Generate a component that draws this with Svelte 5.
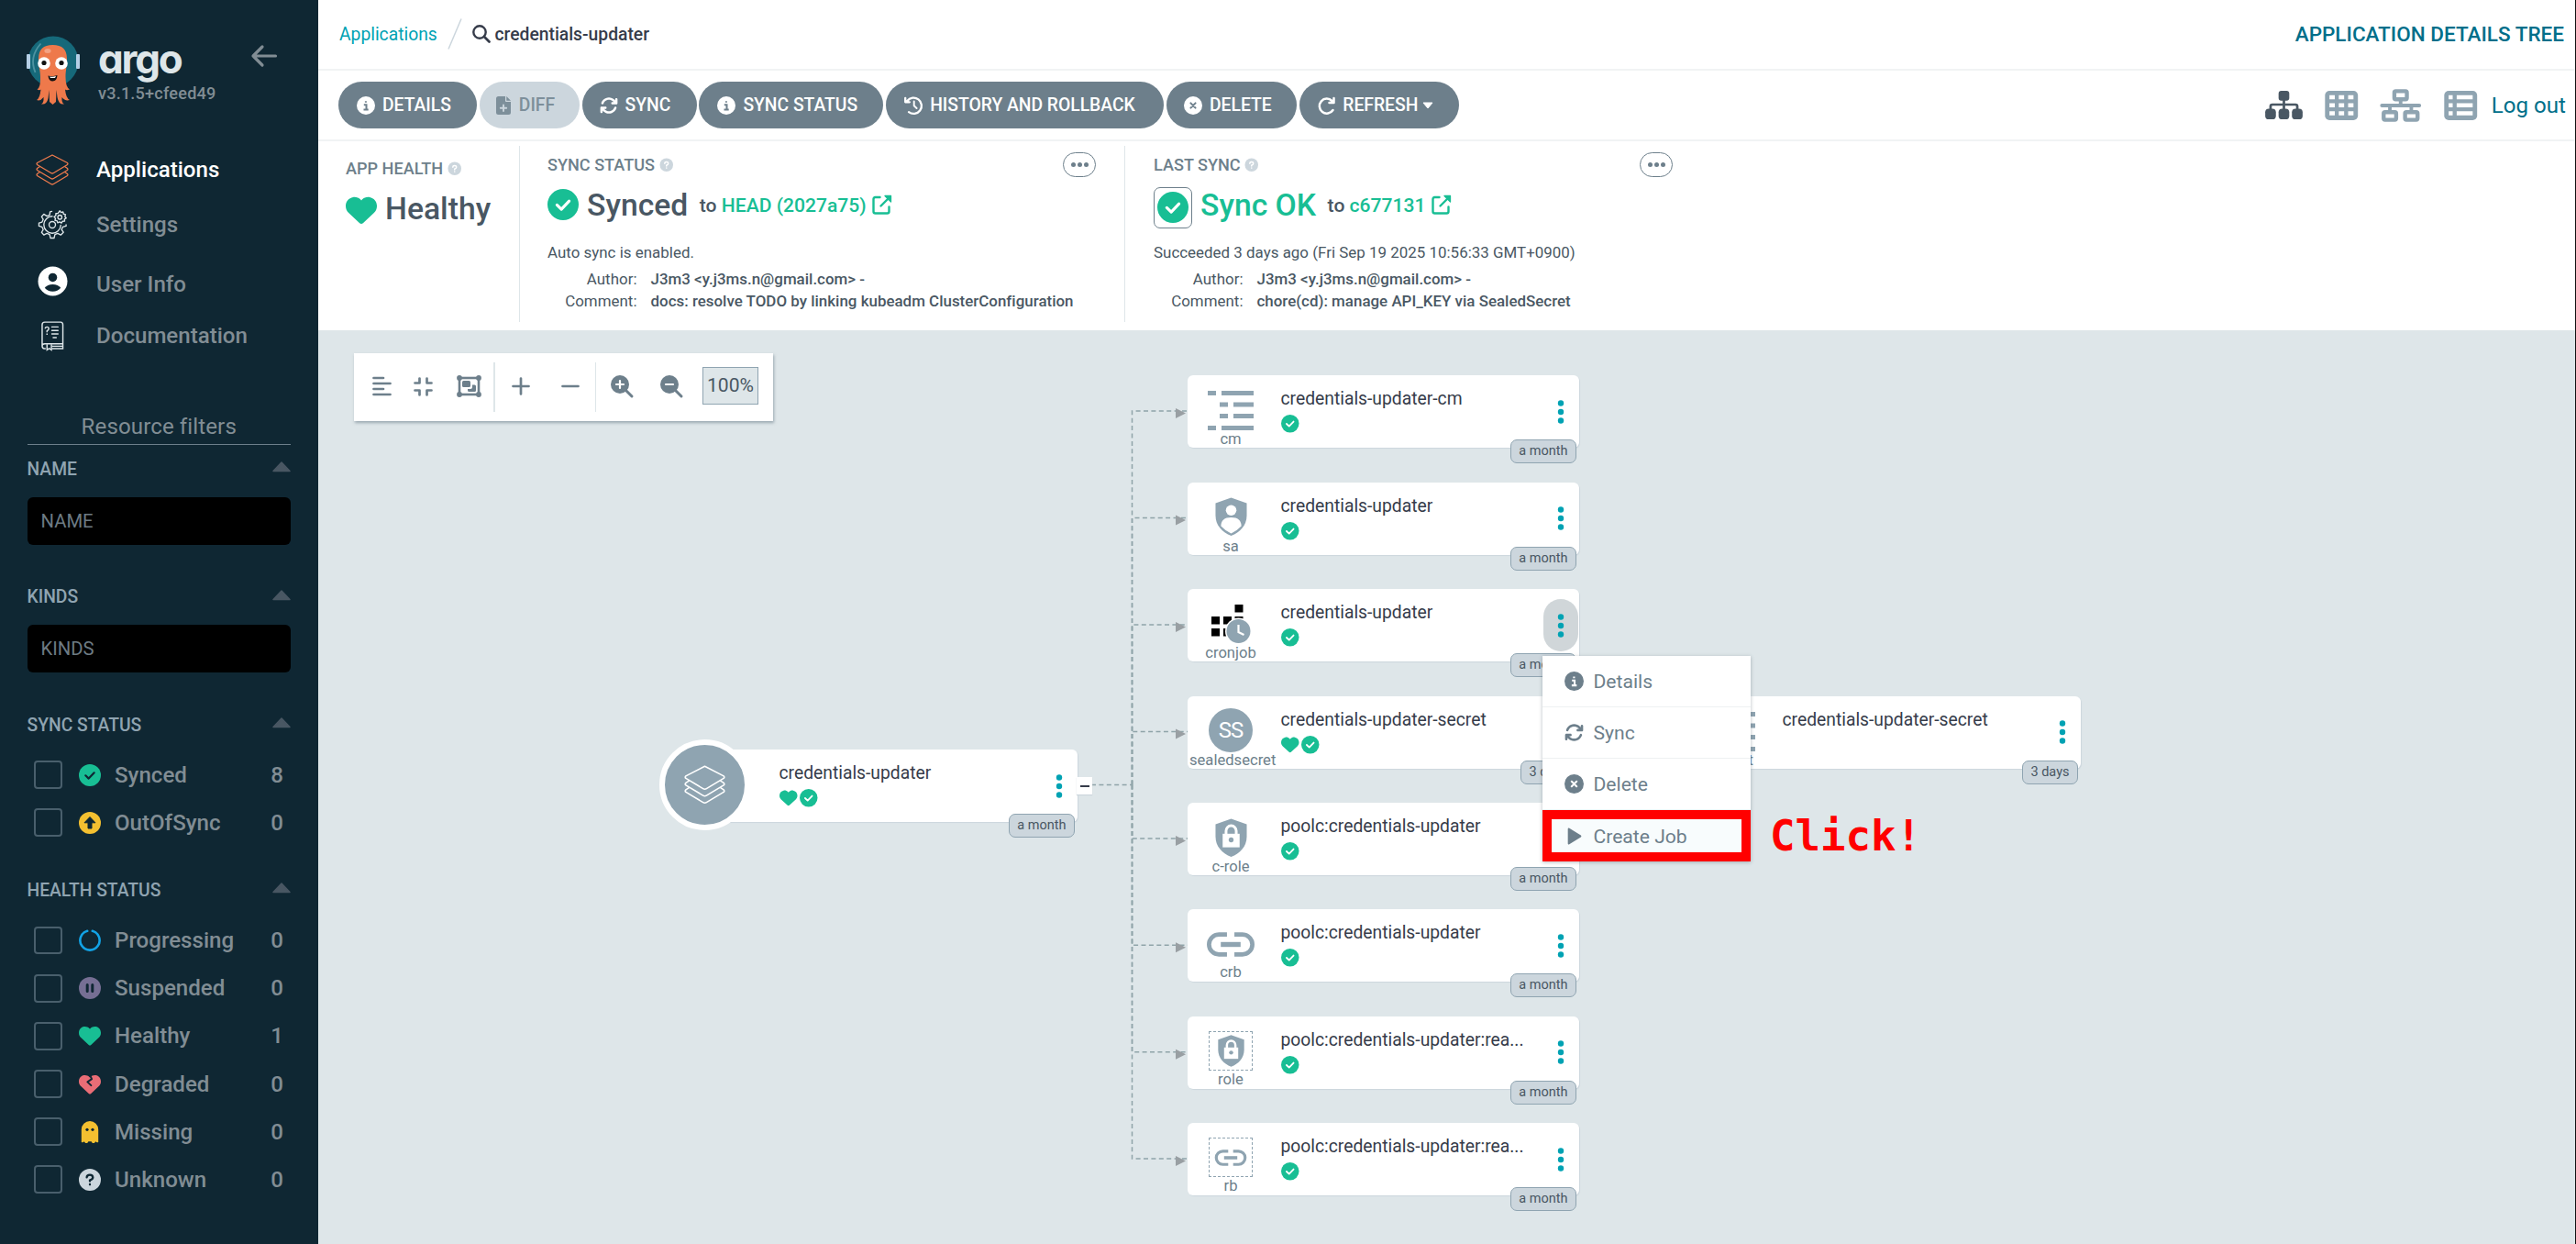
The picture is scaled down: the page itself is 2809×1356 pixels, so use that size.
<script>
  const nav = [
    { label: 'Applications', icon: 'layers', active: true },
    { label: 'Settings', icon: 'gears' },
    { label: 'User Info', icon: 'user' },
    { label: 'Documentation', icon: 'book' }
  ];

  const syncFilters = [
    { label: 'Synced', icon: 'check', count: 8 },
    { label: 'OutOfSync', icon: 'up', count: 0 }
  ];

  const healthFilters = [
    { label: 'Progressing', icon: 'ring', count: 0 },
    { label: 'Suspended', icon: 'pause', count: 0 },
    { label: 'Healthy', icon: 'heart', count: 1 },
    { label: 'Degraded', icon: 'broken', count: 0 },
    { label: 'Missing', icon: 'ghost', count: 0 },
    { label: 'Unknown', icon: 'unknown', count: 0 }
  ];

  const actions = [
    { label: 'DETAILS', icon: 'info', cls: 'b-details' },
    { label: 'DIFF', icon: 'file', cls: 'b-diff', disabled: true },
    { label: 'SYNC', icon: 'sync', cls: 'b-sync' },
    { label: 'SYNC STATUS', icon: 'info', cls: 'b-status' },
    { label: 'HISTORY AND ROLLBACK', icon: 'history', cls: 'b-history' },
    { label: 'DELETE', icon: 'cross', cls: 'b-delete' },
    { label: 'REFRESH', icon: 'refresh', cls: 'b-refresh', caret: true }
  ];

  // Coordinates are relative to the tree canvas.
  const COL = 948;
  const nodes = [
    { x: COL, y: 49, kind: 'cm', icon: 'cm', name: 'credentials-updater-cm', age: 'a month', synced: true },
    { x: COL, y: 165.5, kind: 'sa', icon: 'sa', name: 'credentials-updater', age: 'a month', synced: true },
    { x: COL, y: 282, kind: 'cronjob', icon: 'cronjob', name: 'credentials-updater', age: 'a month', synced: true, open: true },
    { x: COL, y: 398.5, kind: 'sealedsecret', icon: 'ss', name: 'credentials-updater-secret', age: '3 days', synced: true, healthy: true },
    { x: COL, y: 515, kind: 'c-role', icon: 'crole', name: 'poolc:credentials-updater', age: 'a month', synced: true },
    { x: COL, y: 631.3, kind: 'crb', icon: 'crb', name: 'poolc:credentials-updater', age: 'a month', synced: true },
    { x: COL, y: 747.8, kind: 'role', icon: 'role', name: 'poolc:credentials-updater:rea...', age: 'a month', synced: true },
    { x: COL, y: 864, kind: 'rb', icon: 'rb', name: 'poolc:credentials-updater:rea...', age: 'a month', synced: true },
    { x: 1495, y: 398.5, kind: 'secret', icon: 'cm', name: 'credentials-updater-secret', age: '3 days' }
  ];
  const children = nodes.slice(0, 8);

  const menu = [
    { label: 'Details', icon: 'info' },
    { label: 'Sync', icon: 'sync' },
    { label: 'Delete', icon: 'cross' },
    { label: 'Create Job', icon: 'play' }
  ];
</script>

{#snippet shield()}
  <path d="M25 2 L48 10 V28 C48 43 38 53 25 58 C12 53 2 43 2 28 V10 Z" fill="#8fa4b1" />
{/snippet}

{#snippet lock()}
  <path d="M17.5 26 V20 a7.5 8 0 0 1 15 0 V26" fill="none" stroke="#fff" stroke-width="4" />
  <rect x="12.5" y="24" width="25" height="20" fill="#fff" />
  <circle cx="25" cy="33" r="3.6" fill="#8fa4b1" />
{/snippet}

{#snippet chain()}
  <path d="M34 4 H21 a16 16 0 0 0 0 32 H34 M46 4 H59 a16 16 0 0 1 0 32 H46" fill="none" stroke="#8fa4b1" stroke-width="7" />
  <path d="M24 20 H56" stroke="#8fa4b1" stroke-width="8" />
{/snippet}

{#snippet icon(name)}
  {#if name === 'layers'}
    <svg class="ic-layers" viewBox="0 0 36 34" fill="none" stroke="currentColor" stroke-width="1.3" stroke-linejoin="round">
      <path d="M18 1 L34.5 9.5 Q35.5 10.5 34.5 11.5 L19.5 20.5 Q18 21.5 16.5 20.5 L1.5 11.5 Q.5 10.5 1.5 9.5 Z" />
      <path d="M4.5 13.5 L1.5 15.5 Q.5 16.5 1.5 17.5 L16.5 26.5 Q18 27.5 19.5 26.5 L34.5 17.5 Q35.5 16.5 34.5 15.5 L31.5 13.5" />
      <path d="M4.5 19.5 L1.5 21.5 Q.5 22.5 1.5 23.5 L16.5 32.5 Q18 33.5 19.5 32.5 L34.5 23.5 Q35.5 22.5 34.5 21.5 L31.5 19.5" />
    </svg>
  {:else if name === 'gears'}
    <svg class="ic-gears" viewBox="0 0 34 34" fill="none" stroke="currentColor" stroke-width="1.4" stroke-linejoin="round" stroke-linecap="round">
      <path d="M16 2.5 L14 3 L13.5 6.5 L10.5 7.8 L7 5.5 L4.5 8.5 L6.3 11.5 L5 14.5 L1.5 15.5 V19 L5 20 L6.3 23 L4.5 26 L7 29 L10.5 27.2 L13.5 28.5 L14.5 32.5 H18.5 L19.5 28.5 L22.5 27.2 L26 29 L29 26 L27 23 L28.2 20 L32 19 V17.5" />
      <path d="M16.5 8 A9.5 9.5 0 1 0 26 18" />
      <circle cx="16.5" cy="17.5" r="3.6" />
      <circle cx="25" cy="9" r="2.3" />
      <path d="M25 1.8 l1.3 2 2.3-.7 .5 2.3 2.3 .6 -.7 2.2 1.5 1.7 -2 1.3 .2 2.3 -2.4 .1 -1.2 2 -2-1.3 -2.2 1 -.8-2.3 -2.3-.4 .6-2.3 -1.6-1.7 2-1.4 0-2.3 2.3-.2 z" />
    </svg>
  {:else if name === 'user'}
    <svg class="ic-user" viewBox="0 0 34 34">
      <circle cx="17" cy="17" r="16.5" fill="#fff" />
      <circle cx="17" cy="12.8" r="4.9" fill="#0f2733" />
      <path d="M8 24.5 Q11 20.5 17 20.5 T26 24.5 Q22.5 28.5 17 28.5 T8 24.5 Z" fill="#0f2733" />
    </svg>
  {:else if name === 'book'}
    <svg class="ic-book" viewBox="0 0 26 34" fill="none" stroke="currentColor" stroke-width="1.5">
      <path d="M5 31 H3.5 Q1 31 1 28 V4 Q1 1 4 1 H22 Q24.5 1 24.5 4 V27 M1 28 Q1 25.5 4 25.5 H24.5 M12 31 H24.5 V25.5 M12 28.3 H24.5" />
      <path d="M6.5 26 V32.5 L9 31 L11.5 32.5 V26" />
      <path d="M12 6.5 H19 M12 10.5 H19 M12 14.5 H19 M13.5 18.5 H17" stroke-linecap="round" />
      <path d="M4.5 8.5 Q4.5 6.5 6.5 6.5 T8.5 8.5 Q8.5 10 6.5 11 V12.5 M6.5 14 V15.5" />
    </svg>
  {:else if name === 'check'}
    <svg class="ic-dot" viewBox="0 0 24 24"><circle cx="12" cy="12" r="12" fill="#18be94" /><path class="tick" d="M7.3 12.3 L10.7 15.6 L16.7 9.3" fill="none" stroke-width="2.2" stroke-linecap="round" stroke-linejoin="round" /></svg>
  {:else if name === 'up'}
    <svg class="ic-dot" viewBox="0 0 24 24"><circle cx="12" cy="12" r="12" fill="#f4c030" /><path d="M12 5.5 L18 11.8 H14 V18 H10 V11.8 H6 Z" fill="#0f2733" stroke="#0f2733" stroke-linejoin="round" /></svg>
  {:else if name === 'ring'}
    <svg class="ic-dot" viewBox="0 0 24 24"><path d="M9.2 1.8 A10.6 10.6 0 1 0 14.8 1.8" fill="none" stroke="#12a3e6" stroke-width="2.6" stroke-linecap="round" /></svg>
  {:else if name === 'pause'}
    <svg class="ic-dot" viewBox="0 0 24 24"><circle cx="12" cy="12" r="12" fill="#766f94" /><path d="M9.2 8.5 V15.5 M14.8 8.5 V15.5" stroke="#0f2733" stroke-width="3" stroke-linecap="round" /></svg>
  {:else if name === 'heart'}
    <svg class="ic-dot" viewBox="0 0 512 512"><path fill="#18be94" d="M47.6 300.4L228.3 469.1c7.5 7 17.4 10.9 27.7 10.9s20.2-3.9 27.7-10.9L464.4 300.4c30.4-28.3 47.6-68 47.6-109.5v-5.8c0-69.9-50.5-129.5-119.4-141C347 36.5 300.6 51.4 268 84L256 96 244 84c-32.6-32.6-79-47.5-124.6-39.9C50.5 55.6 0 115.2 0 185.1v5.8c0 41.5 17.2 81.2 47.6 109.5z" /></svg>
  {:else if name === 'broken'}
    <svg class="ic-dot" viewBox="0 0 512 512"><path fill="#e96d76" d="M47.6 300.4L228.3 469.1c7.5 7 17.4 10.9 27.7 10.9s20.2-3.9 27.7-10.9L464.4 300.4c30.4-28.3 47.6-68 47.6-109.5v-5.8c0-69.9-50.5-129.5-119.4-141C347 36.5 300.6 51.4 268 84L256 96 244 84c-32.6-32.6-79-47.5-124.6-39.9C50.5 55.6 0 115.2 0 185.1v5.8c0 41.5 17.2 81.2 47.6 109.5z" /><path d="M262 50 L300 130 L200 200 L285 280" fill="none" stroke="#0f2733" stroke-width="42" stroke-linejoin="round" stroke-linecap="round" /></svg>
  {:else if name === 'ghost'}
    <svg class="ic-dot" viewBox="0 0 24 24"><path d="M2.8 9.2 A9.2 9.2 0 0 1 21.2 9.2 V23 Q19.5 24 18.3 22.3 L16.8 24 H14.8 L13.6 22.3 H10.4 L9.2 24 H7.2 L5.7 22.3 Q4.5 24 2.8 23 Z" fill="#f4c030" /><circle cx="9" cy="9.3" r="1.6" fill="#0f2733" /><circle cx="15" cy="9.3" r="1.6" fill="#0f2733" /></svg>
  {:else if name === 'unknown'}
    <svg class="ic-dot" viewBox="0 0 24 24"><circle cx="12" cy="12" r="12" fill="#ccd6dd" /><path d="M8.6 9.3 Q8.8 6.6 12 6.6 T15.3 9.6 Q15.2 11.2 12 12.6 V13.6 M12 17 V17.3" fill="none" stroke="#0f2733" stroke-width="2.3" stroke-linecap="round" /></svg>
  {:else if name === 'info'}
    <svg class="ic" viewBox="0 0 20 20"><circle cx="10" cy="10" r="10" fill="currentColor" /><path class="hole" d="M7.8 9.3 H10.5 V14.3 M7.5 14.4 H12.7 M9.9 5.2 V6.8" fill="none" stroke-width="2" /></svg>
  {:else if name === 'cross'}
    <svg class="ic" viewBox="0 0 20 20"><circle cx="10" cy="10" r="10" fill="currentColor" /><path class="hole" d="M7.4 7.4 L12.6 12.6 M12.6 7.4 L7.4 12.6" fill="none" stroke-width="2" stroke-linecap="round" /></svg>
  {:else if name === 'file'}
    <svg class="ic ic-file" viewBox="0 0 17 20"><path d="M2.5 0 H10 V5 Q10 6 11 6 H16 V17.5 Q16 20 13.5 20 H2.5 Q0 20 0 17.5 V2.5 Q0 0 2.5 0 Z M11.3 0 L16 4.8 H11.3 Z" fill="currentColor" /><path d="M8 9.5 V16 M4.8 12.7 H11.2" stroke="#ccd6dd" stroke-width="1.9" stroke-linecap="round" /></svg>
  {:else if name === 'sync'}
    <svg class="ic" viewBox="0 0 512 512"><path fill="currentColor" d="M105.1 202.6c7.7-21.8 20.2-42.3 37.8-59.8c62.5-62.5 163.8-62.5 226.3 0L386.3 160H352c-17.7 0-32 14.3-32 32s14.3 32 32 32H463.9c17.7 0 32-14.3 32-32V80c0-17.7-14.3-32-32-32s-32 14.3-32 32v35.2L414.4 97.6c-87.5-87.5-229.3-87.5-316.8 0C73.2 122 55.6 150.7 44.8 181.4c-5.9 16.7 2.9 34.9 19.5 40.8s34.9-2.9 40.8-19.5zM39 289.3c-5 1.5-9.8 4.2-13.7 8.2c-4 4-6.7 8.8-8.1 14c-.3 1.2-.6 2.5-.8 3.8c-.3 1.7-.4 3.4-.4 5.1V432c0 17.7 14.3 32 32 32s32-14.3 32-32V396.9l17.6 17.5c87.5 87.4 229.3 87.4 316.7 0c24.4-24.4 42.1-53.1 52.9-83.7c5.9-16.7-2.9-34.9-19.5-40.8s-34.9 2.9-40.8 19.5c-7.7 21.8-20.2 42.3-37.8 59.8c-62.5 62.5-163.8 62.5-226.3 0L125.6 352H160c17.7 0 32-14.3 32-32s-14.3-32-32-32H48.4c-1.6 0-3.2 .1-4.8 .3s-3.1 .5-4.6 1z" /></svg>
  {:else if name === 'history'}
    <svg class="ic" viewBox="0 0 20 20" fill="none" stroke="currentColor" stroke-width="2.3" stroke-linecap="round" stroke-linejoin="round"><path d="M3.3 5 A8.7 8.7 0 1 1 5 17.2 M1.2 1.8 V6.3 H5.8" /><path d="M10.7 5.5 V10.3 L13.6 13" stroke-width="1.9" /></svg>
  {:else if name === 'refresh'}
    <svg class="ic ic-refresh" viewBox="0 0 19 20" fill="none" stroke="currentColor" stroke-width="2.5" stroke-linecap="round" stroke-linejoin="round"><path d="M16.5 15 A8 8 0 1 1 15.5 5 L17 6.5 M17.5 2 V7 H12.5" /></svg>
  {:else if name === 'play'}
    <svg class="ic" viewBox="0 0 20 20"><path d="M4.5 2.5 L16.5 10 L4.5 17.5 Z" fill="currentColor" stroke="currentColor" stroke-width="2" stroke-linejoin="round" /></svg>
  {:else if name === 'link'}
    <svg class="ic-link" viewBox="0 0 22 22" fill="none" stroke="#18be94" stroke-width="2.4" stroke-linecap="round" stroke-linejoin="round"><path d="M8.5 3 H3.5 Q1.5 3 1.5 5 V18.5 Q1.5 20.5 3.5 20.5 H16.5 Q18.5 20.5 18.5 18.5 V13.5" /><path d="M9.5 12.5 L19 3" /><path d="M14 1.5 H20.5 V8 Z" fill="#18be94" stroke-width="1.3" /></svg>
  {:else if name === 'help'}
    <svg class="ic-help" viewBox="0 0 16 16"><circle cx="8" cy="8" r="7.5" fill="#ccd6dd" /><path d="M6 6.4 Q6 4.6 8 4.6 T10 6.4 Q10 7.5 8 8.5 V9.2 M8 11.3 V11.5" fill="none" stroke="#fff" stroke-width="1.5" stroke-linecap="round" /></svg>
  {:else if name === 'dots'}
    <svg class="ic-kebab" viewBox="0 0 8 26" fill="#00a2b3"><circle cx="4" cy="3.5" r="3.2" /><circle cx="4" cy="13" r="3.2" /><circle cx="4" cy="22.5" r="3.2" /></svg>
  {:else if name === 'cm'}
    <svg class="k-cm" viewBox="0 0 50 44" fill="#8fa4b1"><rect x="0" y="0" width="9" height="5" /><rect x="15" y="0" width="35" height="5" /><rect x="13" y="12.5" width="9" height="5" /><rect x="28" y="12.5" width="22" height="5" /><rect x="13" y="25" width="9" height="5" /><rect x="28" y="25" width="22" height="5" /><rect x="0" y="38" width="9" height="5" /><rect x="15" y="38" width="35" height="5" /></svg>
  {:else if name === 'sa'}
    <svg class="k-shield" viewBox="0 0 50 60">{@render shield()}<circle cx="25" cy="20.5" r="7.8" fill="#fff" /><path d="M10 44 Q10 31 25 31 T40 44 Q33 51.5 25 54.5 Q17 51.5 10 44 Z" fill="#fff" /></svg>
  {:else if name === 'crole'}
    <svg class="k-shield" viewBox="0 0 50 60">{@render shield()}{@render lock()}</svg>
  {:else if name === 'cronjob'}
    <svg class="k-cron" viewBox="0 0 43 43"><path d="M25.5 0 h9 v8.5 h-9 z M0 13 h9 v8.5 h-9 z M13 13 h9 v8.5 h-9 z M25.5 13 h9 v8.5 h-9 z M0 26 h9 v8.5 h-9 z M13 26 h9 v8.5 h-9 z" fill="#000" /><circle cx="29.5" cy="29" r="14.5" fill="#fff" /><circle cx="29.5" cy="29" r="13" fill="#8fa4b1" /><path d="M29.5 22 V30 L35.5 33" fill="none" stroke="#fff" stroke-width="2.2" /></svg>
  {:else if name === 'ss'}
    <span class="k-ss">SS</span>
  {:else if name === 'crb'}
    <svg class="k-crb" viewBox="0 0 80 40">{@render chain()}</svg>
  {:else if name === 'role'}
    <span class="k-box"><svg class="k-role" viewBox="0 0 50 60">{@render shield()}{@render lock()}</svg></span>
  {:else if name === 'rb'}
    <span class="k-box"><svg class="k-rb" viewBox="0 0 80 40">{@render chain()}</svg></span>
  {/if}
{/snippet}

{#snippet filterHead(title)}
  <div class="filter-head">
    <span>{title}</span>
    <svg class="tri" viewBox="0 0 20 12"><path d="M10 1 L19 10.5 H1 Z" fill="#495763" stroke="#495763" stroke-width="1.5" stroke-linejoin="round" /></svg>
  </div>
{/snippet}

{#snippet filterRow(item)}
  <label class="filter-row">
    <span class="box"></span>
    {@render icon(item.icon)}
    <span class="f-label">{item.label}</span>
    <span class="f-count">{item.count}</span>
  </label>
{/snippet}

<div class="app">
  <aside class="sidebar">
    <div class="brand">
      <svg class="argo-logo" viewBox="0 0 60 78">
        <circle cx="30" cy="29" r="27.5" fill="#16697a" />
        <path d="M10.500 41 Q3.500 24 16.500 9.500" fill="none" stroke="#4c93a1" stroke-width="1.8" />
        <rect x="1" y="21" width="4" height="16" rx="1" fill="#b4cfe6" />
        <rect x="55" y="21" width="4" height="16" rx="1" fill="#b4cfe6" />
        <path d="M14 26 Q14 11 29.5 11 T45 26 C45 36 43.500 38 43.500 46 Q43.500 57 48 59.500 Q44.500 61 43 59.500 Q44 69 48 71 Q43 72.500 39.500 68 Q39 74 42 75.500 Q36 76.500 34.500 68 L33.500 60 L33 73 L29.500 76 L26 73 L25.500 60 L24.500 69 Q23 76.500 17 75.500 Q20 74 19.500 68 Q16 72.500 12 71 Q15.500 69 16.500 59.500 Q15 61 12.500 59.500 Q16.500 57 16 46 C16 38 14 36 14 26 Z" fill="#ee794b" />
        <ellipse cx="24" cy="17.5" rx="3.6" ry="2.5" fill="#f4a284" />
        <circle cx="20" cy="31" r="6.8" fill="#fff" />
        <circle cx="39" cy="31" r="6.8" fill="#fff" />
        <circle cx="20" cy="30.5" r="2.6" fill="#111" />
        <circle cx="39" cy="30.5" r="2.6" fill="#111" />
        <path d="M24.500 44.500 Q29.500 46 34.500 44 Q34 50.500 29.500 50.500 T24.500 44.500 Z" fill="#111" />
        <path d="M26 45.400 Q29.500 46.200 33 45 L32 47 H27 Z" fill="#fff" />
      </svg>
      <div class="brand-text">
        <span class="wordmark">argo</span>
        <span class="version">v3.1.5+cfeed49</span>
      </div>
      <svg class="back" viewBox="0 0 28 24" fill="none" stroke="#818d94" stroke-width="3.2" stroke-linecap="round" stroke-linejoin="round"><path d="M26.500 12 H2 M12 2 L2 12 L12 22" /></svg>
    </div>

    <nav>
      {#each nav as n}
        <div class="nav-item {n.icon}" class:active={n.active}>
          <span class="nav-icon">{@render icon(n.icon)}</span>
          <span class="nav-label">{n.label}</span>
        </div>
      {/each}
    </nav>

    <div class="filters">
      <div class="filters-title">Resource filters</div>
      {@render filterHead('NAME')}
      <div class="field">NAME</div>
      <div class="kinds">
        {@render filterHead('KINDS')}
        <div class="field">KINDS</div>
      </div>
      <div class="sync-group">
        {@render filterHead('SYNC STATUS')}
        {#each syncFilters as f}{@render filterRow(f)}{/each}
      </div>
      <div class="health-group">
        {@render filterHead('HEALTH STATUS')}
        {#each healthFilters as f}{@render filterRow(f)}{/each}
      </div>
    </div>
  </aside>

  <main>
    <header class="crumbs">
      <span class="crumb-link">Applications</span>
      <svg class="slash" viewBox="0 0 16 34"><path d="M15 .5 L1 33.5" stroke="#ccd6dd" stroke-width="1.5" /></svg>
      <svg class="search" viewBox="0 0 20 20" fill="none" stroke="#363c4a" stroke-linecap="round"><circle cx="8" cy="8" r="6.7" stroke-width="2.4" /><path d="M13 13 L18.5 18.5" stroke-width="2.8" /></svg>
      <span class="crumb-current">credentials-updater</span>
      <span class="page-title">APPLICATION DETAILS TREE</span>
    </header>

    <div class="toolbar">
      {#each actions as a}
        <div class="btn {a.cls}" class:disabled={a.disabled}>
          {@render icon(a.icon)}<span>{a.label}</span>
          {#if a.caret}<svg class="caret" viewBox="0 0 12 8"><path d="M1 1 H11 L6 7 Z" fill="#fff" stroke="#fff" stroke-linejoin="round" /></svg>{/if}
        </div>
      {/each}
      <div class="views">
        <svg class="v-tree" viewBox="0 0 42 34" fill="#495763"><rect x="15" y="1" width="12" height="11" rx="3" /><rect x="0" y="21" width="12" height="12" rx="4" /><rect x="15" y="21" width="12" height="12" rx="4" /><rect x="30" y="21" width="12" height="12" rx="4" /><path d="M21 10 V22 M6 22 V18.5 Q6 16.5 8 16.5 H34 Q36 16.5 36 18.5 V22" fill="none" stroke="#495763" stroke-width="2.8" /></svg>
        <svg class="v-grid" viewBox="0 0 37 33"><rect x="0" y="0" width="37" height="33" rx="5" fill="#8fa4b1" /><path d="M5 5 h6 v4.5 h-6z M15.5 5 h6 v4.5 h-6z M26 5 h6 v4.5 h-6z M5 14 h6 v4.5 h-6z M15.5 14 h6 v4.5 h-6z M26 14 h6 v4.5 h-6z M5 23 h6 v4.5 h-6z M15.5 23 h6 v4.5 h-6z M26 23 h6 v4.5 h-6z" fill="#fff" /></svg>
        <svg class="v-net" viewBox="0 0 46 37" fill="none" stroke="#8fa4b1" stroke-width="4.5"><rect x="16" y="2.5" width="14" height="9" rx="1.5" /><rect x="4" y="26" width="14" height="8.5" rx="1.5" /><rect x="28" y="26" width="14" height="8.5" rx="1.5" /><path d="M2 18.5 H44" stroke-width="4" stroke-linecap="round" /><path d="M23 12 V18 M11 19 V25 M35 19 V25" stroke-width="4" /></svg>
        <svg class="v-list" viewBox="0 0 37 33"><rect x="0" y="0" width="37" height="33" rx="5" fill="#8fa4b1" /><path d="M5 5 h4.5 v4.5 h-4.5z M14 5 h18 v4.5 h-18z M5 14 h4.5 v4.5 h-4.5z M14 14 h18 v4.5 h-18z M5 23 h4.5 v4.5 h-4.5z M14 23 h18 v4.5 h-18z" fill="#fff" /></svg>
        <span class="logout">Log out</span>
      </div>
    </div>

    <section class="status">
      <div class="panel health">
        <div class="p-head">APP HEALTH {@render icon('help')}</div>
        <div class="p-main">{@render icon('heart')}<span class="big">Healthy</span></div>
      </div>
      <div class="panel sync">
        <div class="p-head">SYNC STATUS {@render icon('help')}<span class="more"><i></i><i></i><i></i></span></div>
        <div class="p-main">{@render icon('check')}<span class="big">Synced</span><span class="to">to <b>HEAD (2027a75)</b></span>{@render icon('link')}</div>
        <div class="p-note">Auto sync is enabled.</div>
        <div class="p-row author"><span>Author:</span><b>J3m3 &lt;y.j3ms.n@gmail.com&gt; -</b></div>
        <div class="p-row"><span>Comment:</span><b>docs: resolve TODO by linking kubeadm ClusterConfiguration</b></div>
      </div>
      <div class="panel last">
        <div class="p-head">LAST SYNC {@render icon('help')}<span class="more"><i></i><i></i><i></i></span></div>
        <div class="p-main"><span class="frame">{@render icon('check')}</span><span class="big ok">Sync OK</span><span class="to">to <b>c677131</b></span>{@render icon('link')}</div>
        <div class="p-note">Succeeded 3 days ago (Fri Sep 19 2025 10:56:33 GMT+0900)</div>
        <div class="p-row author"><span>Author:</span><b>J3m3 &lt;y.j3ms.n@gmail.com&gt; -</b></div>
        <div class="p-row"><span>Comment:</span><b>chore(cd): manage API_KEY via SealedSecret</b></div>
      </div>
    </section>

    <section class="canvas">
      <div class="graph-tools">
        <svg class="t-align" viewBox="0 0 21 22" stroke="#6d7f8b" stroke-width="2.7" stroke-linecap="round"><path d="M1.5 2 H12 M1.5 8 H19.5 M1.5 14 H12 M1.5 20 H19.5" /></svg>
        <svg class="t-compress" viewBox="0 0 21 21" fill="none" stroke="#6d7f8b" stroke-width="2.7" stroke-linecap="round" stroke-linejoin="round"><path d="M1.5 6.5 H6.5 V1.5 M14.5 1.5 V6.5 H19.5 M1.5 14.5 H6.5 V19.5 M14.5 19.5 V14.5 H19.5" /></svg>
        <svg class="t-group" viewBox="0 0 27 24"><rect x="3" y="3" width="21" height="18" fill="none" stroke="#6d7f8b" stroke-width="2.6" /><g fill="#6d7f8b"><circle cx="3" cy="3" r="2.9" /><circle cx="24" cy="3" r="2.9" /><circle cx="3" cy="21" r="2.9" /><circle cx="24" cy="21" r="2.9" /><rect x="6" y="6" width="9" height="7" rx="1.5" /><path d="M12 15 H15 Q17 15 17 13 V10.5 H19.5 Q21 10.5 21 12 V16.5 Q21 18 19.5 18 H13.5 Q12 18 12 16.5 Z" /></g></svg>
        <span class="sep"></span>
        <svg class="t-plus" viewBox="0 0 20 20" stroke="#6d7f8b" stroke-width="2.7" stroke-linecap="round"><path d="M1.5 10 H18.5 M10 1.5 V18.5" /></svg>
        <svg class="t-minus" viewBox="0 0 20 20" stroke="#6d7f8b" stroke-width="2.7" stroke-linecap="round"><path d="M1.5 10 H18.5" /></svg>
        <span class="sep"></span>
        <svg class="t-zoom" viewBox="0 0 25 25"><circle cx="10" cy="10" r="10" fill="#6d7f8b" /><path d="M16 16 L23 23" stroke="#6d7f8b" stroke-width="3" stroke-linecap="round" /><path d="M6 10 H14 M10 6 V14" stroke="#fff" stroke-width="2.2" stroke-linecap="round" /></svg>
        <svg class="t-zoom" viewBox="0 0 25 25"><circle cx="10" cy="10" r="10" fill="#6d7f8b" /><path d="M16 16 L23 23" stroke="#6d7f8b" stroke-width="3" stroke-linecap="round" /><path d="M6 10 H14" stroke="#fff" stroke-width="2.2" stroke-linecap="round" /></svg>
        <span class="zoom-value">100%</span>
      </div>

      <svg class="edges" viewBox="0 0 2461 996">
        <g fill="none" stroke="#8fa4a9" stroke-width="1.5" stroke-dasharray="5 3.4">
          <path d="M843 495.5 H887.5" />
          {#each children as c}
            <path d="M887.5 495.5 V{c.y + 39} H948" />
          {/each}
        </g>
        {#each children as c}
          <path d="M935 {c.y + 36} L946 {c.y + 41.5} L935 {c.y + 47} Z" fill="#999fa3" />
        {/each}
      </svg>

      <div class="node root">
        <span class="root-icon">{@render icon('layers')}</span>
        <div class="n-name">credentials-updater</div>
        <div class="n-status">{@render icon('heart')}{@render icon('check')}</div>
        <span class="kebab">{@render icon('dots')}</span>
        <span class="age">a month</span>
        <span class="collapse"></span>
      </div>

      {#each nodes as n}
        <div class="node" style="left:{n.x}px; top:{n.y}px">
          <div class="n-kind"><span class="n-glyph">{@render icon(n.icon)}</span><span class="n-kind-name">{n.kind}</span></div>
          <div class="n-name">{n.name}</div>
          <div class="n-status">
            {#if n.healthy}{@render icon('heart')}{/if}
            {#if n.synced}{@render icon('check')}{/if}
          </div>
          <span class="kebab" class:open={n.open}>{@render icon('dots')}</span>
          <span class="age">{n.age}</span>
        </div>
      {/each}

      <div class="menu">
        {#each menu as m}
          <div class="menu-item" class:marked={m.icon === 'play'}>{@render icon(m.icon)}<span>{m.label}</span></div>
        {/each}
      </div>
      <span class="callout">Click!</span>
    </section>
  </main>
</div>

<style>
  :global(body) {
    margin: 0;
    overflow: hidden;
  }
  .app {
    display: flex;
    width: 2809px;
    height: 1356px;
    font-family: Roboto, 'Liberation Sans', sans-serif;
    color: #363c4a;
    white-space: nowrap;
    overflow: hidden;
  }
  svg {
    display: block;
    flex: none;
    overflow: visible;
  }

  /* sidebar */
  .sidebar {
    box-sizing: border-box;
    width: 347px;
    height: 1356px;
    flex: none;
    background: #0f2733;
    color: #818d94;
  }
  .brand {
    display: flex;
    height: 154.5px;
    align-items: flex-start;
  }
  .argo-logo {
    width: 60px;
    height: 78px;
    margin: 38px 0 0 28px;
  }
  .brand-text {
    display: flex;
    flex-direction: column;
    width: 150px;
    margin: 38px 0 0 19px;
  }
  .wordmark {
    font: 700 44px/52px Inter, sans-serif;
    font-feature-settings: 'cv11';
    letter-spacing: -2.2px;
    color: #dee6e9;
    height: 52px;
  }
  .version {
    font-size: 18.1px;
    line-height: 24px;
    font-weight: 500;
    letter-spacing: 0.2px;
  }
  .back {
    width: 28px;
    height: 24px;
    margin: 49px 0 0 17px;
  }
  .nav-item {
    display: flex;
    align-items: center;
    height: 60.3px;
    font-size: 24.1px;
    font-weight: 500;
  }
  .nav-item.user {
    height: 70px;
  }
  .nav-item.user .nav-icon {
    padding-bottom: 8px;
  }
  .nav-item.book {
    height: 42px;
  }
  .nav-item.active {
    color: #fff;
  }
  .nav-icon {
    width: 36px;
    margin: 0 30px 0 39px;
    display: flex;
    justify-content: center;
    color: #dee6e9;
  }
  .active .nav-icon {
    color: #ef7b4d;
  }
  .ic-layers {
    width: 36px;
    height: 34px;
  }
  .ic-gears,
  .ic-user {
    width: 33px;
    height: 33px;
  }
  .ic-book {
    width: 25px;
    height: 33px;
  }
  .filters {
    padding: 60.4px 30px 0 29.5px;
  }
  .filters-title {
    height: 37px;
    line-height: 37px;
    font-size: 24.1px;
    letter-spacing: 0.1px;
    text-align: center;
    border-bottom: 1.5px solid #6d7f8b;
  }
  .filter-head {
    display: flex;
    justify-content: space-between;
    align-items: center;
    height: 52px;
    font-size: 19.3px;
    font-weight: 500;
    color: #8fa4b1;
  }
  .tri {
    width: 20px;
    height: 12px;
    margin-bottom: 4px;
  }
  .field {
    box-sizing: border-box;
    margin-top: 4.5px;
    height: 52px;
    line-height: 52px;
    padding-left: 15px;
    border-radius: 6px;
    background: #000;
    color: #6d7b84;
    font-size: 20.3px;
  }
  .kinds {
    margin-top: 31px;
  }
  .sync-group {
    margin-top: 31px;
  }
  .health-group {
    margin-top: 21.5px;
  }
  .filter-row {
    display: flex;
    align-items: center;
    height: 52.1px;
    font-size: 24.1px;
    font-weight: 500;
    padding: 0 8px 0 7.5px;
  }
  .sync-group .filter-head {
    margin-bottom: 2px;
  }
  .health-group .filter-head {
    margin-bottom: 3px;
  }
  .box {
    box-sizing: border-box;
    width: 30.5px;
    height: 30.5px;
    border: 2px solid #495f6c;
    border-radius: 4px;
    margin-right: 18.5px;
  }
  .ic-dot {
    width: 24px;
    height: 24px;
  }
  .tick {
    stroke: var(--tick-color, #0f2733);
  }
  .f-label {
    flex: 1;
    margin-left: 15px;
  }

  /* header */
  main {
    --tick-color: #fff;
    display: flex;
    flex-direction: column;
    flex: 1;
    background: #fff;
    border-right: 1px solid #111;
  }
  .crumbs {
    display: flex;
    align-items: center;
    box-sizing: border-box;
    height: 77px;
    padding: 0 12px 1px 23px;
    border-bottom: 2px solid #f1f3f4;
    font-size: 19.3px;
  }
  .crumb-link {
    width: 118px;
    color: #00a2b3;
  }
  .slash {
    width: 16px;
    height: 34px;
    margin-right: 11px;
  }
  .search {
    width: 20px;
    height: 20px;
    margin-right: 4.5px;
  }
  .crumb-current {
    font-weight: 500;
    flex: 1;
  }
  .page-title {
    font-size: 22.5px;
    font-weight: 500;
    color: #006f8a;
  }
  .toolbar {
    display: flex;
    align-items: center;
    gap: 2.8px;
    box-sizing: border-box;
    height: 77px;
    padding: 0 10px 0 22px;
    border-bottom: 2px solid #f1f3f4;
  }
  .btn {
    --hole: #6d7f8b;
    box-sizing: border-box;
    display: flex;
    align-items: center;
    height: 51px;
    padding-left: 20px;
    gap: 8px;
    border-radius: 26px;
    background: #6d7f8b;
    color: #fff;
    font-size: 19.3px;
    font-weight: 500;
  }
  .btn.disabled {
    background: #ccd6dd;
    color: #7d8f9a;
  }
  .b-details { width: 151px; }
  .b-diff { width: 109px; padding-left: 18px; }
  .b-sync { width: 125px; padding-left: 19px; }
  .b-status { width: 201px; }
  .b-history { width: 303px; }
  .b-delete { width: 142.5px; padding-left: 19px; }
  .b-refresh { width: 174px; }
  .ic {
    width: 20px;
    height: 20px;
  }
  .ic-file {
    width: 17px;
  }
  .ic-refresh {
    width: 19px;
  }
  .hole {
    stroke: var(--hole);
  }
  .caret {
    width: 12px;
    height: 8px;
    margin-left: -3px;
  }
  .views {
    display: flex;
    align-items: center;
    margin-left: auto;
    color: #006f8a;
    font-size: 24.1px;
  }
  .v-tree {
    width: 41px;
    height: 33px;
    margin-right: 24px;
  }
  .v-grid {
    width: 36.5px;
    height: 32px;
    margin-right: 23.5px;
  }
  .v-net {
    width: 45.5px;
    height: 36px;
    margin-right: 24.5px;
  }
  .v-list {
    width: 36.5px;
    height: 32px;
    margin-right: 15px;
  }

  /* status panel */
  .status {
    display: flex;
    height: 206px;
    box-sizing: border-box;
    padding-top: 5px;
    color: #495763;
  }
  .panel {
    box-sizing: border-box;
    height: 192px;
    padding-left: 31px;
    border-right: 1.5px solid #dee6e9;
  }
  .health {
    width: 220px;
    padding: 4px 0 0 30px;
  }
  .sync {
    width: 660px;
    padding-left: 30px;
  }
  .last {
    width: 640px;
    border: 0;
  }
  .p-head {
    display: flex;
    align-items: center;
    height: 41px;
    font-size: 18.1px;
    font-weight: 500;
    color: #6d7f8b;
  }
  .ic-help {
    width: 15.5px;
    height: 15.5px;
    margin-left: 4.5px;
  }
  .more {
    box-sizing: border-box;
    display: flex;
    justify-content: center;
    align-items: center;
    gap: 2px;
    width: 36px;
    height: 27px;
    margin: 0 31px 0 auto;
    border: 1.5px solid #6d7f8b;
    border-radius: 14px;
  }
  .last .more {
    margin-right: 43px;
  }
  .more i {
    width: 5px;
    height: 5px;
    border-radius: 50%;
    background: #6d7f8b;
  }
  .p-main {
    display: flex;
    align-items: center;
    height: 46px;
  }
  .p-main .ic-dot {
    width: 34px;
    height: 34px;
  }
  .health .p-main {
    height: 47px;
  }
  .health .p-main .ic-dot {
    margin-top: 3px;
  }
  .big {
    font-size: 33.7px;
    font-weight: 500;
    margin-left: 9px;
  }
  .big.ok,
  .to b {
    color: #18be94;
  }
  .to {
    font-size: 21.1px;
    font-weight: 500;
    margin-left: 12.5px;
  }
  .to b {
    font-weight: 500;
  }
  .ic-link {
    width: 22px;
    height: 22px;
    margin-left: 6px;
  }
  .frame {
    box-sizing: border-box;
    display: flex;
    justify-content: center;
    align-items: center;
    width: 42px;
    height: 45px;
    margin-top: 6px;
    border: 1.5px solid #6d7f8b;
    border-radius: 7px;
  }
  .p-note {
    margin-top: 16px;
    height: 26px;
    line-height: 26px;
    font-size: 16.9px;
    letter-spacing: 0.02px;
  }
  .p-row {
    display: flex;
    height: 24px;
    line-height: 24px;
    font-size: 16.9px;
    letter-spacing: 0.02px;
  }
  .p-row.author {
    margin-top: 4px;
  }
  .p-row span {
    width: 97.5px;
    text-align: right;
    margin-right: 15px;
  }
  .p-row b {
    font-weight: 500;
  }

  /* tree canvas */
  .canvas {
    position: relative;
    flex: 1;
    background: #dee6e9;
    overflow: hidden;
  }
  .graph-tools {
    position: absolute;
    left: 39px;
    top: 25px;
    box-sizing: border-box;
    width: 457px;
    height: 74px;
    padding-left: 20px;
    display: flex;
    align-items: center;
    background: #fff;
    box-shadow: 1px 2px 3px rgba(109, 127, 139, 0.6);
  }
  .t-align { width: 21px; height: 22px; margin: 0 24px 2px 0; }
  .t-compress { width: 21px; height: 21px; margin: 0 26px 2px 0; }
  .t-group { width: 27px; height: 24px; margin: 0 13px 2px 0; }
  .sep {
    width: 1.5px;
    height: 54px;
    background: #dee6e9;
  }
  .t-plus { width: 20px; height: 20px; margin: 0 34px 2px 18px; }
  .t-minus { width: 20px; height: 20px; margin: 0 17px 2px 0; }
  .t-zoom { width: 25px; height: 25px; margin: 0 14px 2px 15.5px; }
  .zoom-value {
    box-sizing: border-box;
    width: 61px;
    height: 41px;
    line-height: 38px;
    margin: 0 0 3px 7px;
    text-align: center;
    font-size: 21.1px;
    color: #495763;
    background: #dee6e9;
    border: 1.5px solid #8fa4b1;
  }
  .edges {
    position: absolute;
    inset: 0;
    width: 2461px;
    height: 996px;
  }
  .node {
    position: absolute;
    box-sizing: border-box;
    width: 426.5px;
    height: 79px;
    padding: 13px 0 0 101.5px;
    border-radius: 6px;
    background: #fff;
    box-shadow: 1px 1px 1px #ccd6dd;
  }
  .node.root {
    left: 401px;
    top: 457px;
  }
  .root-icon {
    position: absolute;
    left: -29px;
    top: -11px;
    box-sizing: border-box;
    width: 99px;
    height: 99px;
    display: flex;
    justify-content: center;
    align-items: center;
    border: 6px solid #fff;
    border-radius: 50%;
    background: #8fa4b1;
    color: #fff;
  }
  .root-icon .ic-layers {
    width: 45px;
    height: 42.5px;
  }
  .n-kind {
    position: absolute;
    left: 2px;
    top: 0;
    width: 90px;
    height: 79px;
    display: flex;
    flex-direction: column;
    align-items: safe center;
    color: #6d7f8b;
    font-size: 16.6px;
    line-height: 20px;
  }
  .n-glyph {
    height: 60px;
    display: flex;
    justify-content: center;
    align-items: flex-start;
  }
  .k-cm { width: 50px; height: 44px; margin-top: 17px; }
  .k-shield { width: 37px; height: 44.5px; margin-top: 15.5px; }
  .k-cron { width: 43px; height: 43px; margin-top: 16.5px; }
  .k-crb { width: 54px; height: 27px; margin-top: 25px; }
  .k-ss {
    width: 48px;
    height: 48px;
    line-height: 49px;
    margin-top: 13px;
    border-radius: 50%;
    background: #8fa4b1;
    color: #fff;
    font-size: 24px;
    letter-spacing: -1px;
    text-align: center;
  }
  .k-box {
    box-sizing: border-box;
    width: 48px;
    height: 43px;
    margin-top: 16px;
    display: flex;
    justify-content: center;
    align-items: center;
    border: 1.5px dashed #8fa4b1;
  }
  .k-role { width: 31px; height: 37px; }
  .k-rb { width: 36px; height: 18px; }
  .n-name {
    height: 26px;
    line-height: 26px;
    font-size: 19.3px;
  }
  .n-status {
    display: flex;
    gap: 3px;
    margin-top: 4px;
  }
  .n-status .ic-dot {
    width: 19.5px;
    height: 19.5px;
  }
  .kebab {
    position: absolute;
    right: 1px;
    top: 11px;
    width: 38px;
    height: 57px;
    display: flex;
    justify-content: center;
    align-items: center;
    border-radius: 19px;
  }
  .kebab.open {
    background: #d0d6d9;
  }
  .ic-kebab {
    width: 8px;
    height: 26px;
  }
  .age {
    position: absolute;
    right: 3px;
    top: 70px;
    box-sizing: border-box;
    height: 26px;
    line-height: 23px;
    padding: 0 8px;
    border: 1.5px solid #8fa4b1;
    border-radius: 7px;
    background: #ccd6dd;
    color: #495763;
    font-size: 14.5px;
  }
  .collapse {
    position: absolute;
    left: 426px;
    top: 30px;
    width: 17px;
    height: 19px;
    display: flex;
    justify-content: center;
    align-items: center;
    background: #fff;
    box-shadow: 0 1px 1px #ccd6dd;
  }
  .collapse::before {
    content: '';
    width: 10px;
    height: 2px;
    background: #363c4a;
  }
  .menu {
    --hole: #fff;
    position: absolute;
    left: 1335px;
    top: 355px;
    width: 227px;
    background: #fff;
    box-shadow: 0 1px 4px rgba(73, 87, 99, 0.4);
  }
  .menu-item {
    box-sizing: border-box;
    display: flex;
    align-items: center;
    height: 56px;
    padding-left: 23.5px;
    gap: 11px;
    font-size: 21.1px;
    color: #6d7f8b;
    border-bottom: 1.5px solid #eef1f2;
  }
  .menu-item .ic {
    width: 21px;
    height: 21px;
  }
  .menu-item.marked {
    border: 10px solid #f00;
    padding: 0 0 0 13.5px;
    background: #f8fcfd;
  }
  .callout {
    position: absolute;
    left: 1583px;
    top: 524.5px;
    font: 700 45.7px/54px 'DejaVu Sans Mono', monospace;
    color: #f00;
  }
</style>
